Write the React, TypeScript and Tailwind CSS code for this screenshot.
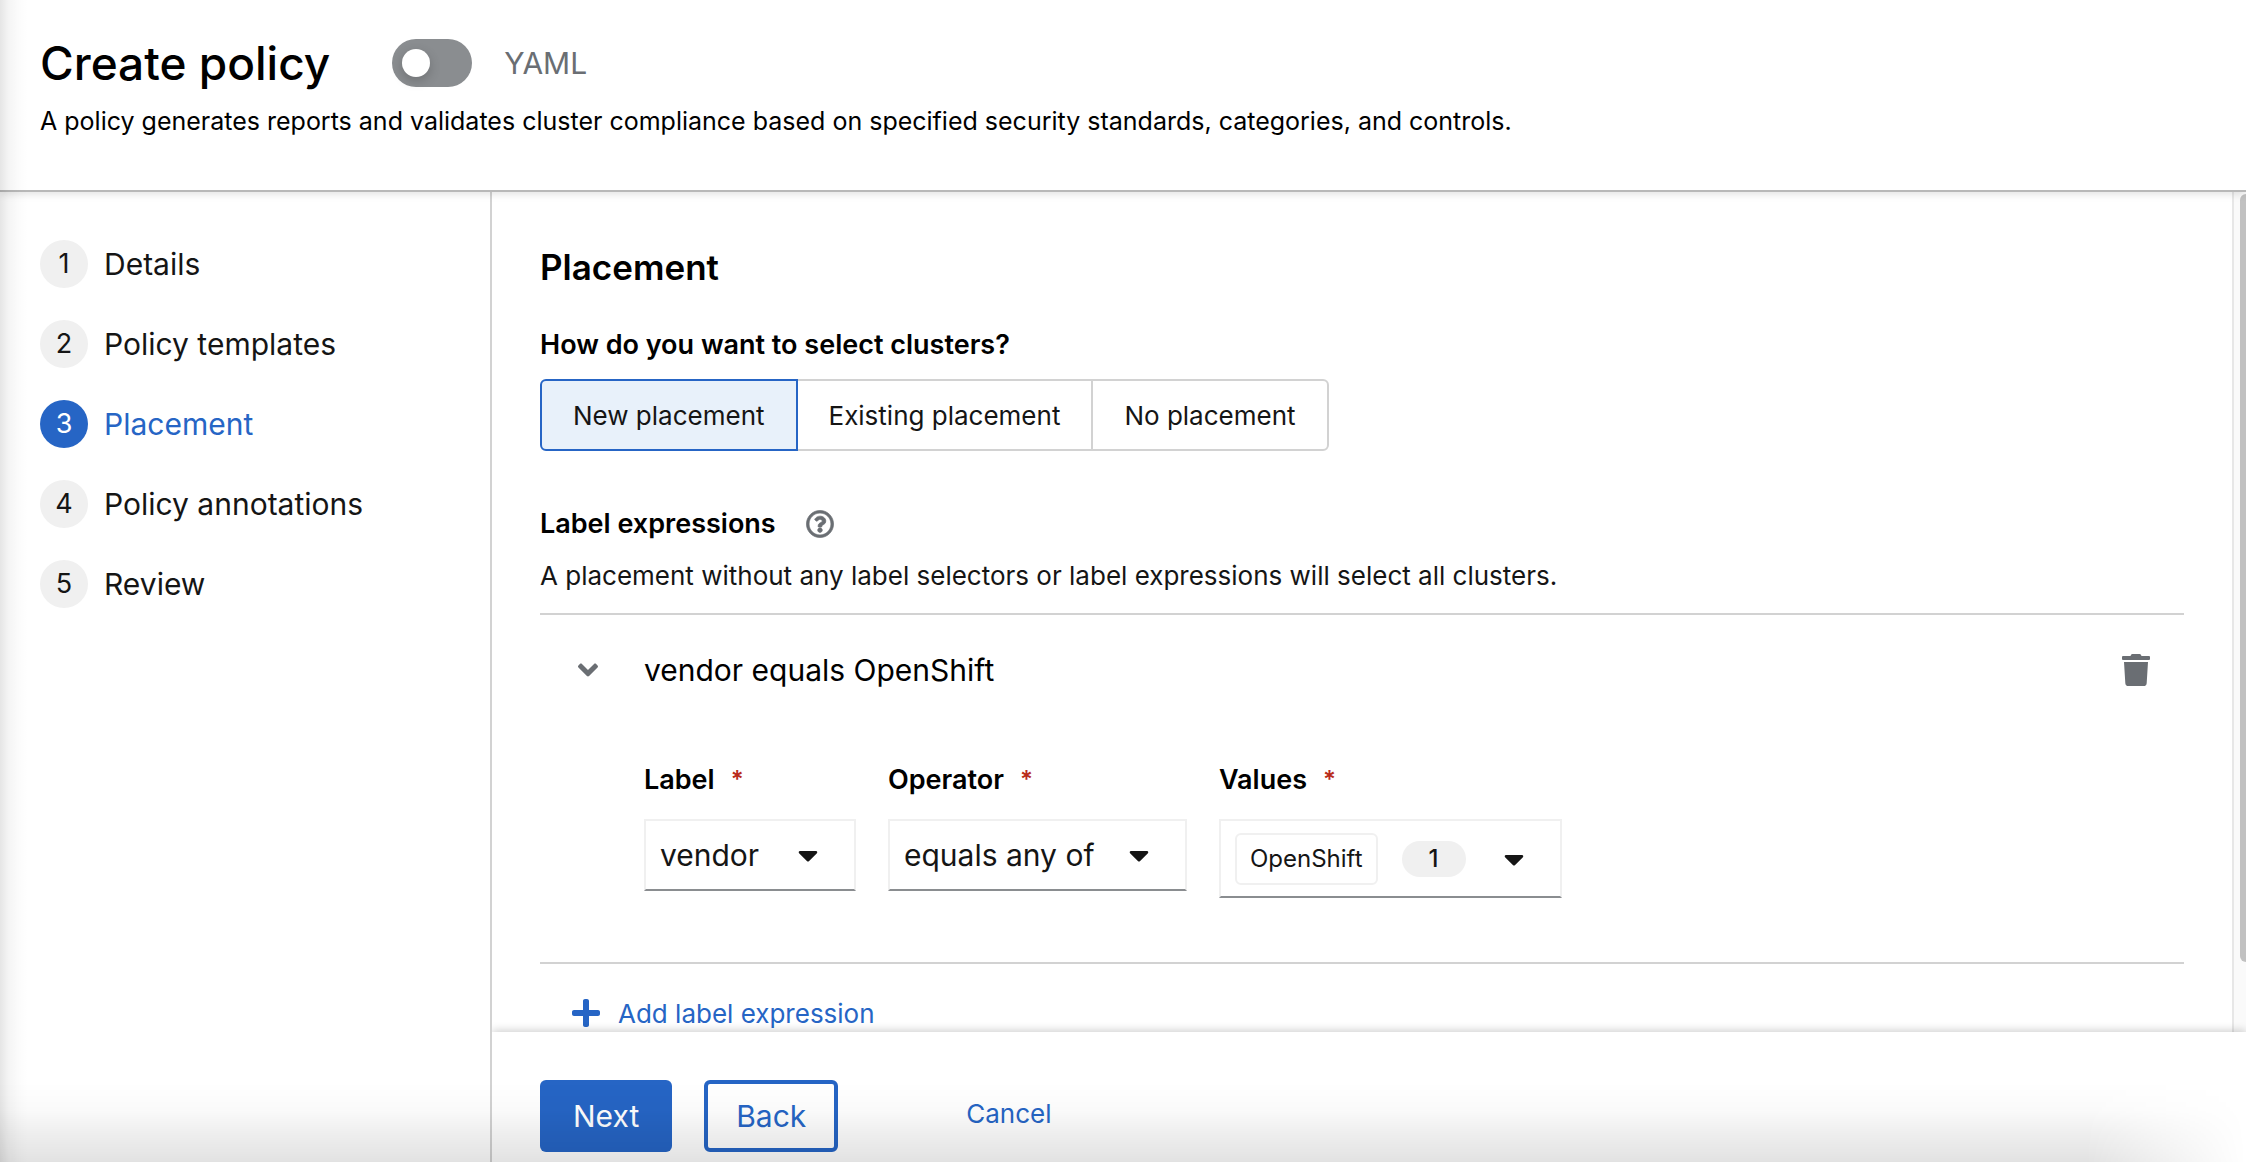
import { useState } from "react";
import { FaAngleDown, FaCaretDown, FaPlus, FaRegQuestionCircle, FaTrash } from "react-icons/fa";

const steps = ["Details", "Policy templates", "Placement", "Policy annotations", "Review"];
const placements = ["New placement", "Existing placement", "No placement"];

function FieldLabel({ id, htmlFor, text }: { id?: string; htmlFor: string; text: string }) {
  return (
    <label id={id} htmlFor={htmlFor} className="flex gap-4 text-[27px] leading-[42px] font-semibold text-black">
      {text}
      <span aria-hidden="true" className="text-2xl leading-[42px] font-semibold text-[#b92b1c]">*</span>
    </label>
  );
}

function SelectField({ id, label, options, width }: { id: string; label: string; options: string[]; width: string }) {
  return (
    <div className="flex flex-col gap-[18px]">
      <FieldLabel htmlFor={id} text={label} />
      <div className={`relative ${width}`}>
        <select
          id={id}
          className="h-[72px] w-full appearance-none border-2 border-[#f0f0f0] border-b-[#8a8d90] bg-white pr-14 pl-[14px] text-[30px] text-[#151515]"
        >
          {options.map((o) => (
            <option key={o}>{o}</option>
          ))}
        </select>
        <FaCaretDown className="pointer-events-none absolute top-5 right-8 size-8" />
      </div>
    </div>
  );
}

export default function App() {
  const [step, setStep] = useState(2);
  const [placement, setPlacement] = useState(0);

  return (
    <div className="relative flex h-screen flex-col overflow-hidden bg-white font-['Inter',sans-serif] text-[#151515]">
      <header className="z-10 shrink-0 border-b-2 border-[#b8b8b8] bg-white px-10 pt-[39px] pb-12 shadow-[0_2px_8px_rgba(0,0,0,0.12)]">
        <div className="flex h-12 items-center">
          <h1 className="text-[46px] leading-[48px] font-medium text-black">Create policy</h1>
          <label className="ml-[62px] flex items-center gap-8 text-3xl text-[#6a6e73]">
            <input type="checkbox" role="switch" className="peer sr-only" />
            <span className="flex h-12 w-20 items-center rounded-full bg-[#8a8d90] px-[10px] peer-checked:justify-end peer-checked:bg-[#2665c5]">
              <span className="size-7 rounded-full bg-white shadow-[0_4px_12px_rgba(0,0,0,0.2)]" />
            </span>
            YAML
          </label>
        </div>
        <p className="mt-[13px] text-[25px] leading-[42px] text-black">
          A policy generates reports and validates cluster compliance based on specified security standards, categories,
          and controls.
        </p>
      </header>

      <div className="flex min-h-0 flex-1">
        <nav aria-label="Wizard steps" className="w-[492px] shrink-0 border-r-2 border-[#d2d2d2] px-10 pt-12">
          <ol className="flex flex-col gap-8">
            {steps.map((name, i) => (
              <li key={name}>
                <button
                  type="button"
                  onClick={() => setStep(i)}
                  aria-current={i === step ? "step" : undefined}
                  className={`flex h-12 items-center gap-4 text-[30px] ${i === step ? "text-[#2665c5]" : ""}`}
                >
                  <span
                    className={`flex size-12 items-center justify-center rounded-full text-[27px] ${
                      i === step ? "bg-[#2665c5] text-white" : "bg-[#f0f0f0]"
                    }`}
                  >
                    {i + 1}
                  </span>
                  {name}
                </button>
              </li>
            ))}
          </ol>
        </nav>

        <div className="flex min-w-0 flex-1 flex-col">
          <div className="flex min-h-0 flex-1">
            <main className="min-w-0 flex-1 overflow-hidden pt-12 pr-12 pl-12">
              <h2 className="text-[35px] leading-[54px] font-semibold text-black">Placement</h2>

              <h3 id="cluster-choice" className="mt-[30px] text-[27px] leading-[42px] font-semibold text-black">
                How do you want to select clusters?
              </h3>
              <div role="group" aria-labelledby="cluster-choice" className="mt-[13px] flex">
                {placements.map((name, i) => (
                  <button
                    key={name}
                    type="button"
                    aria-pressed={i === placement}
                    onClick={() => setPlacement(i)}
                    className={`-ml-[2px] h-[72px] border-2 px-[31px] text-[26px] first:ml-0 first:rounded-l-md last:rounded-r-md ${
                      i === placement ? "relative border-[#2665c5] bg-[#e8f1fa]" : "border-[#d2d2d2] bg-white"
                    }`}
                  >
                    {name}
                  </button>
                ))}
              </div>

              <div className="mt-[52px] flex h-[42px] items-center gap-[30px]">
                <h3 className="text-[27px] font-semibold text-black">Label expressions</h3>
                <button type="button" aria-label="More info for label expressions" className="text-[#6a6e73]">
                  <FaRegQuestionCircle className="size-7 stroke-current stroke-[12px]" />
                </button>
              </div>
              <p className="mt-[10px] text-[26px] leading-[42px]">
                A placement without any label selectors or label expressions will select all clusters.
              </p>

              <section className="mt-4 border-y-2 border-[#d2d2d2] pb-16">
                <div className="flex h-[110px] items-center pr-8">
                  <button
                    type="button"
                    aria-label="Collapse expression"
                    aria-expanded="true"
                    className="ml-7 flex size-10 items-center justify-center text-[#6a6e73]"
                  >
                    <FaAngleDown className="size-8" />
                  </button>
                  <h4 className="ml-9 flex-1 text-[30px] text-black">vendor equals OpenShift</h4>
                  <button type="button" aria-label="Remove expression" className="text-[#6a6e73]">
                    <FaTrash className="size-8" />
                  </button>
                </div>

                <div className="mt-[34px] ml-[104px] flex items-start gap-8">
                  <SelectField id="expr-label" label="Label" options={["vendor", "cloud", "name"]} width="w-[212px]" />
                  <SelectField
                    id="expr-operator"
                    label="Operator"
                    options={["equals any of", "does not equal any of", "exists", "does not exist"]}
                    width="w-[299px]"
                  />
                  <div className="flex flex-col gap-[18px]">
                    <FieldLabel id="expr-values-label" htmlFor="expr-values" text="Values" />
                    <button
                      id="expr-values"
                      type="button"
                      aria-haspopup="listbox"
                      className="flex h-[79px] w-[343px] items-center gap-6 border-2 border-[#f0f0f0] border-b-[#8a8d90] px-[14px]"
                    >
                      <span className="flex h-[52px] items-center rounded-md border-2 border-[#f0f0f0] px-[13px] text-2xl">
                        OpenShift
                      </span>
                      <span className="flex h-9 w-16 items-center justify-center rounded-full bg-[#f0f0f0] text-2xl font-medium">
                        1
                      </span>
                      <FaCaretDown className="ml-2 size-8" />
                    </button>
                  </div>
                </div>
              </section>

              <button type="button" className="ml-[30px] flex h-[98px] items-center gap-4 text-[26px] text-[#2665c5]">
                <FaPlus className="size-8" />
                Add label expression
              </button>
            </main>

            <div aria-hidden="true" className="flex w-[14px] justify-end overflow-hidden border-l-2 border-[#e7e7e7] bg-[#fafafa]">
              <div className="mt-[2px] h-[768px] w-[6px] rounded-l-md bg-[#c1c1c1]" />
            </div>
          </div>

          <footer className="relative flex shrink-0 items-start bg-white px-12 pt-12 pb-[10px] shadow-[0_-2px_8px_rgba(0,0,0,0.18)] [clip-path:inset(-16px_0_0_0)]">
            <button type="button" className="h-[72px] rounded-md bg-[#2665c5] px-[33px] text-[30px] text-white">
              Next
            </button>
            <button
              type="button"
              className="ml-8 h-[72px] rounded-md border-4 border-[#2665c5] px-7 text-[30px] text-[#2665c5]"
            >
              Back
            </button>
            <button type="button" className="ml-24 h-[66px] px-8 text-[26px] text-[#2665c5]">
              Cancel
            </button>
          </footer>
        </div>
      </div>

      {/* Edge shading from the surrounding window */}
      <div
        aria-hidden="true"
        className="pointer-events-none absolute inset-y-0 left-0 z-20 w-7 bg-[linear-gradient(to_right,rgba(0,0,0,0.1),rgba(0,0,0,0.045)_30%,rgba(0,0,0,0.01)_70%,transparent)]"
      />
      <div
        aria-hidden="true"
        className="pointer-events-none absolute inset-x-0 bottom-0 z-20 h-20 bg-[linear-gradient(to_top,rgba(0,0,0,0.115),rgba(0,0,0,0.065)_35%,rgba(0,0,0,0.02)_65%,transparent)] [mask-image:linear-gradient(to_left,transparent,black_160px)]"
      />
    </div>
  );
}
